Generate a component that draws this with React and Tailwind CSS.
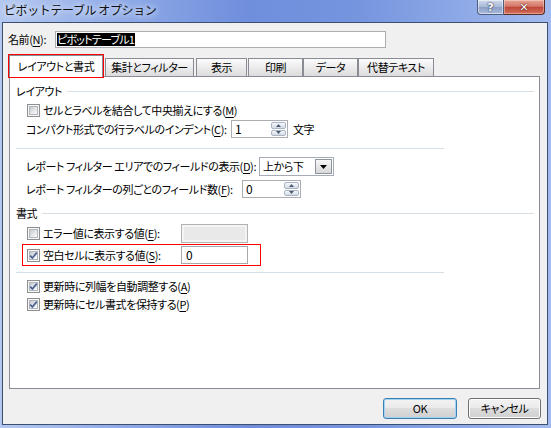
import React from "react";

const font = "font-['Noto_Sans_CJK_JP','Noto_Sans_CJK_SC',sans-serif] [font-feature-settings:'palt']";

function U({ children }) {
  return <span className="underline underline-offset-[2px]">{children}</span>;
}

function Check({ checked }) {
  return (
    <span className="w-[13px] h-[13px] shrink-0 border border-[#8f8f8f] bg-[#f6f6f6] p-px flex">
      <span className="relative flex-1 border border-[#b3b8be] bg-[linear-gradient(135deg,#c4c8ce,#e9eaec_60%,#fafafa)]">
        {checked && (
          <svg className="absolute left-[-2px] top-[-2px]" width="11" height="11" viewBox="0 0 11 11">
            <path d="M2.2 5.6 L4.4 8 L8.8 2.6" fill="none" stroke="#4b6196" strokeWidth="1.7" />
          </svg>
        )}
      </span>
    </span>
  );
}

function SpinBtn({ up }) {
  return (
    <span className="flex-1 border border-[#a9b4c4] rounded-[2px] bg-gradient-to-b from-[#f6f8fb] to-[#d3dbe6] flex items-center justify-center">
      <svg width="5" height="3" viewBox="0 0 5 3">
        {up ? <path d="M0 3 L2.5 0 L5 3Z" fill="#4d5b70" /> : <path d="M0 0 L2.5 3 L5 0Z" fill="#4d5b70" />}
      </svg>
    </span>
  );
}

function Spin({ w, value }) {
  return (
    <div className={"h-[18px] border border-[#abadb3] bg-white flex items-stretch " + w}>
      <span className="flex-1 flex items-center pl-[3px] leading-none text-[12px]">{value}</span>
      <div className="w-[16px] flex flex-col py-px pr-px gap-px">
        <SpinBtn up />
        <SpinBtn />
      </div>
    </div>
  );
}

function Header({ children }) {
  return (
    <div className="flex items-center h-[14px] pl-[6px] pr-[5px] leading-none">
      <span className="whitespace-nowrap">{children}</span>
      <span className="flex-1 h-px bg-[#d5dfe5] ml-[5px]" />
    </div>
  );
}

export default function App() {
  return (
    <div
      className={
        "w-[551px] h-[428px] overflow-hidden flex flex-col text-[11px] tracking-[-0.4px] text-black bg-[linear-gradient(90deg,#b4c8f0_0%,#93ade8_20%,#6f8edc_45%,#7695df_65%,#a2baed_100%)] " +
        font
      }
    >
      {/* Title bar */}
      <div className="h-[22px] flex items-start shrink-0">
        <div className="h-[20px] flex items-center pl-[4px] leading-none text-[12px] tracking-[-0.4px] text-[#111] [font-feature-settings:normal] [text-shadow:0_0_5px_#e8f0ff,0_0_9px_#e8f0ff]">
          ピボットテーブル オプション
        </div>
        <div className="ml-auto mr-[6px] flex tracking-normal">
          <div className="w-[27px] h-[15px] rounded-bl-[4px] border border-t-0 border-[#4f5d7e] bg-[linear-gradient(#cfdaee,#a8b8d6_50%,#8c9fc4_50%,#a9bbdc)] flex items-center justify-center shadow-[inset_0_0_0_1px_rgba(255,255,255,0.5)]">
            <span className="text-white font-bold text-[11px] leading-none font-['DejaVu_Sans',sans-serif] [text-shadow:0_0_2px_#2a3550,0_0_1px_#2a3550]">?</span>
          </div>
          <div className="w-[41px] h-[15px] rounded-br-[4px] border border-t-0 border-l-0 border-[#5a2a26] bg-[linear-gradient(#e8a493,#d3786a_45%,#c0463a_50%,#d2705a)] flex items-center justify-center shadow-[inset_0_0_0_1px_rgba(255,255,255,0.35)]">
            <span className="text-white font-bold text-[11px] leading-none font-['DejaVu_Sans',sans-serif] [text-shadow:0_0_2px_#4a1510,0_0_1px_#4a1510]">✕</span>
          </div>
        </div>
      </div>

      {/* Client */}
      <div className="flex-1 ml-[2px] mr-[3px] mb-[3px] border border-[#3d4f70] bg-[#f0f0f0] flex flex-col">
        {/* Name row */}
        <div className="mt-[8px] pl-[5px] flex items-center h-[17px]">
          <span className="w-[47px] whitespace-nowrap leading-none">
            名前(<U>N</U>):
          </span>
          <div className="w-[331px] h-[17px] border border-[#abadb3] bg-white flex items-center pl-[1px]">
            <span className="bg-black text-white h-[13px] flex items-center leading-none pr-px tracking-[-0.8px]">ピボットテーブル1</span>
          </div>
        </div>

        {/* Tabs */}
        <div className="mt-[7px] ml-[6px] flex items-end h-[21px]">
          <div className="relative z-10 w-[94px] h-[22px] -mb-px border border-b-0 border-[#898c95] bg-white outline-1 outline-[#ff0000] flex items-center justify-center leading-none whitespace-nowrap">
            レイアウトと書式
          </div>
          <div className="ml-[2px] w-[89px] h-[18px] border border-b-0 border-[#898c95] bg-gradient-to-b from-[#fbfbfb] to-[#dcdcdc] flex items-center justify-center leading-none whitespace-nowrap">
            集計とフィルター
          </div>
          <div className="ml-[2px] w-[51px] h-[18px] border border-b-0 border-[#898c95] bg-gradient-to-b from-[#fbfbfb] to-[#dcdcdc] flex items-center justify-center leading-none whitespace-nowrap">
            表示
          </div>
          <div className="ml-[1px] w-[55px] h-[18px] border border-b-0 border-[#898c95] bg-gradient-to-b from-[#fbfbfb] to-[#dcdcdc] flex items-center justify-center leading-none whitespace-nowrap">
            印刷
          </div>
          <div className="w-[55px] h-[18px] border border-b-0 border-[#898c95] bg-gradient-to-b from-[#fbfbfb] to-[#dcdcdc] flex items-center justify-center leading-none whitespace-nowrap">
            データ
          </div>
          <div className="w-[76px] h-[18px] border border-b-0 border-[#898c95] bg-gradient-to-b from-[#fbfbfb] to-[#dcdcdc] flex items-center justify-center leading-none whitespace-nowrap">
            代替テキスト
          </div>
        </div>

        {/* Panel */}
        <div className="ml-[6px] w-[531px] h-[313px] border border-[#898c95] bg-white flex flex-col">
          <div className="mt-[7px]">
            <Header>レイアウト</Header>
          </div>

          <div className="mt-[4px] h-[17px] pl-[17px] flex items-center leading-none whitespace-nowrap">
            <Check />
            <span className="ml-[3px]">
              セルとラベルを結合して中央揃えにする(<U>M</U>)
            </span>
          </div>

          <div className="mt-px h-[18px] pl-[16px] flex items-center leading-none whitespace-nowrap">
            <span className="w-[205px]">
              コンパクト形式での行ラベルのインデント(<U>C</U>):
            </span>
            <Spin w="w-[57px]" value="1" />
            <span className="ml-[5px]">文字</span>
          </div>

          <div className="mt-[10px] ml-[6px] w-[428px] h-px bg-[#d5dfe5]" />

          <div className="mt-[8px] h-[19px] pl-[16px] flex items-center leading-none whitespace-nowrap">
            <span className="w-[233px]">
              レポート フィルター エリアでのフィールドの表示(<U>D</U>):
            </span>
            <div className="w-[75px] h-[19px] border border-[#a5acb5] bg-white flex items-stretch">
              <span className="flex-1 flex items-center pl-[3px]">上から下</span>
              <span className="w-[17px] m-px border border-[#8e959e] bg-gradient-to-b from-[#f7f7f7] to-[#d8d8d8] flex items-center justify-center">
                <svg width="7" height="4" viewBox="0 0 7 4">
                  <path d="M0 0 L7 0 L3.5 4Z" fill="#000" />
                </svg>
              </span>
            </div>
          </div>

          <div className="mt-[4px] h-[18px] pl-[16px] flex items-center leading-none whitespace-nowrap">
            <span className="w-[216px]">
              レポート フィルターの列ごとのフィールド数(<U>F</U>):
            </span>
            <Spin w="w-[59px]" value="0" />
          </div>

          <div className="mt-[8px]">
            <Header>書式</Header>
          </div>

          <div className="mt-[4px] h-[19px] pl-[17px] flex items-center leading-none whitespace-nowrap">
            <Check />
            <span className="ml-[3px] w-[138px]">
              エラー値に表示する値(<U>E</U>):
            </span>
            <div className="w-[67px] h-[19px] border border-[#b2b2b2] bg-[#f4f4f4] p-[2px]">
              <div className="w-full h-full bg-[#e9e9e9]" />
            </div>
          </div>

          <div className="mt-px ml-[12px] w-[239px] h-[22px] border border-[#ff0000] pl-[4px] flex items-center leading-none whitespace-nowrap">
            <Check checked />
            <span className="ml-[3px] w-[138px]">
              空白セルに表示する値(<U>S</U>):
            </span>
            <div className="w-[67px] h-[18px] border border-[#a8a8a8] bg-white flex items-center pl-[4px] text-[12px]">0</div>
          </div>

          <div className="mt-[6px] ml-[6px] w-[428px] h-px bg-[#d5dfe5]" />

          <div className="mt-[5px] h-[16px] pl-[17px] flex items-center leading-none whitespace-nowrap">
            <Check checked />
            <span className="ml-[3px]">
              更新時に列幅を自動調整する(<U>A</U>)
            </span>
          </div>

          <div className="mt-[2px] h-[16px] pl-[17px] flex items-center leading-none whitespace-nowrap">
            <Check checked />
            <span className="ml-[3px]">
              更新時にセル書式を保持する(<U>P</U>)
            </span>
          </div>
        </div>

        {/* Buttons */}
        <div className="mt-[9px] pr-[6px] flex justify-end gap-[11px]">
          <div className="w-[74px] h-[21px] rounded-[3px] border border-[#3c7fb1] bg-[linear-gradient(#f3f3f3,#ebebeb_45%,#dddddd_50%,#cfcfcf)] shadow-[inset_0_0_0_1px_#9fd5f2] flex items-center justify-center leading-none">
            OK
          </div>
          <div className="w-[73px] h-[21px] rounded-[3px] border border-[#707070] bg-[linear-gradient(#f3f3f3,#ebebeb_45%,#dddddd_50%,#cfcfcf)] shadow-[inset_0_0_0_1px_#fcfcfc] flex items-center justify-center leading-none">
            キャンセル
          </div>
        </div>
      </div>
    </div>
  );
}
